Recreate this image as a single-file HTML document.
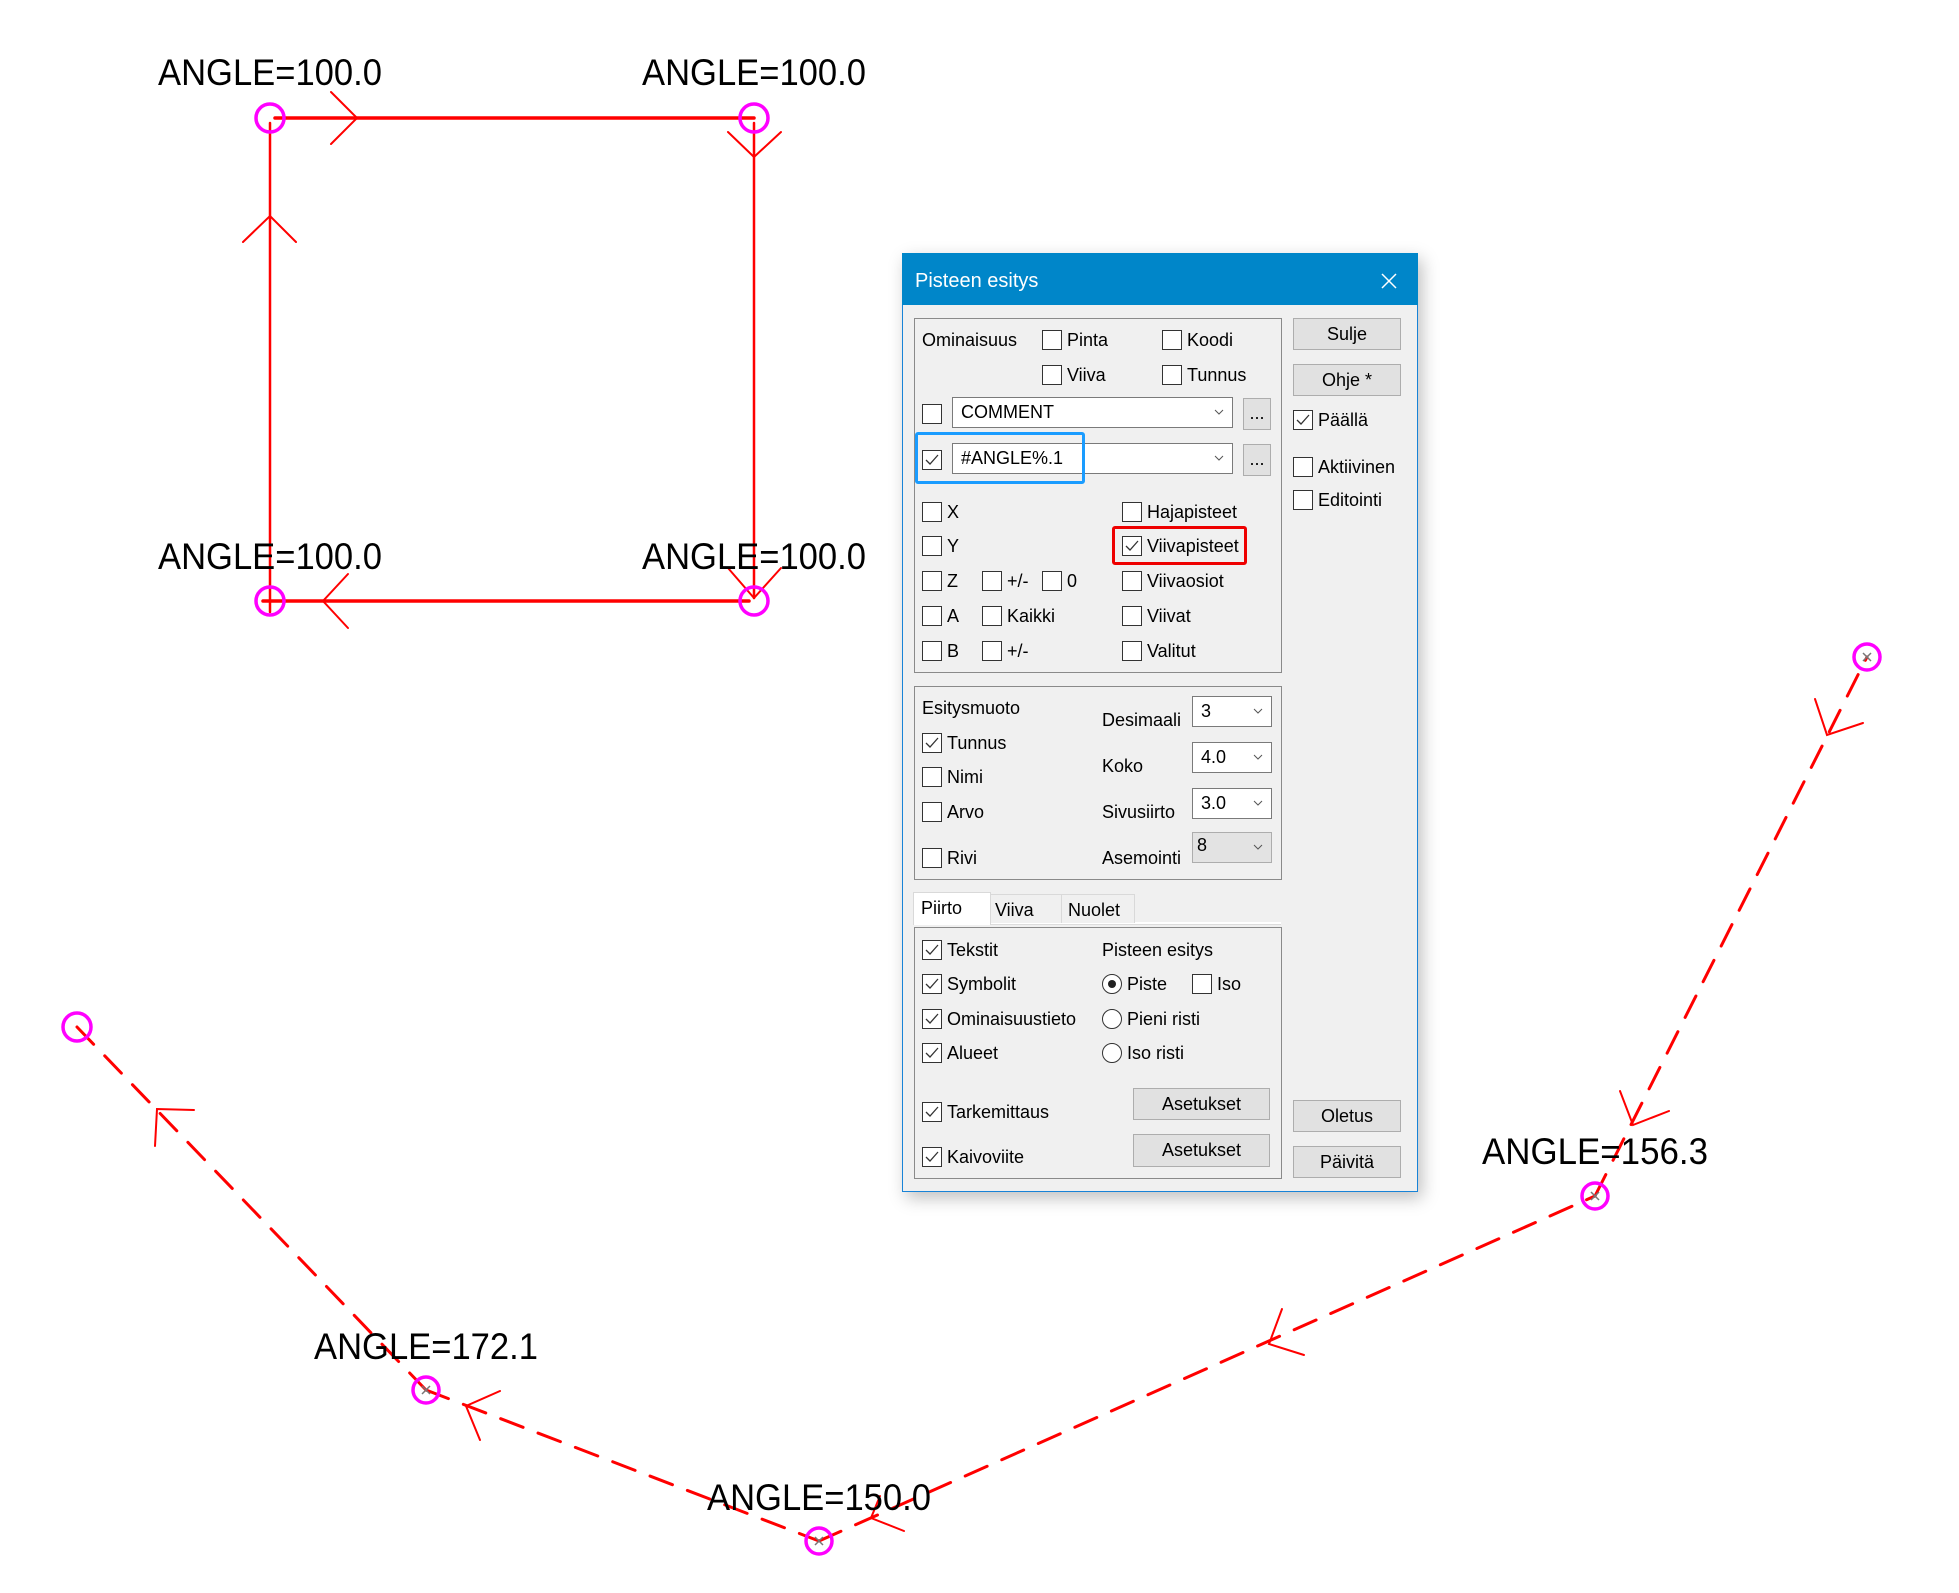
<!DOCTYPE html>
<html><head><meta charset="utf-8">
<style>
html,body{margin:0;padding:0;background:#fff;}
body{width:1959px;height:1593px;position:relative;overflow:hidden;font-family:"Liberation Sans",sans-serif;}
svg.draw{position:absolute;left:0;top:0;}
.dlg{position:absolute;left:902px;top:253px;width:514px;height:937px;background:#f0f0f0;border:1px solid #1883d7;box-shadow:4px 6px 16px rgba(0,0,0,0.25);}
.title{position:absolute;left:902px;top:253px;width:516px;height:52px;background:#0086c9;}
.tt{position:absolute;left:915px;top:268px;color:#fff;font-size:20px;line-height:26px;}
.a{position:absolute;}
.t{position:absolute;font-size:18px;line-height:22px;white-space:nowrap;color:#000;}
.cb{position:absolute;width:18px;height:18px;border:1px solid #333;background:#fff;}
.cb svg{position:absolute;left:0;top:0;}
.grp{position:absolute;border:1px solid #8a8a8a;}
.btn{position:absolute;background:#e1e1e1;border:1px solid #adadad;box-sizing:border-box;text-align:center;font-size:18px;color:#000;}
.combo{position:absolute;background:#fff;border:1px solid #7a7a7a;box-sizing:border-box;font-size:18px;}
.combo .v{position:absolute;left:8px;top:3px;line-height:22px;}
.chev{position:absolute;right:8px;top:50%;margin-top:-4px;}
.rad{position:absolute;width:18px;height:18px;border:1px solid #333;border-radius:50%;background:#fff;}
</style></head><body>

<svg class="draw" width="1959" height="1593" viewBox="0 0 1959 1593">
 <g stroke="#ff0000" fill="none" stroke-linecap="round">
  <line x1="275" y1="118" x2="754" y2="118" stroke-width="3.5"/>
  <line x1="754" y1="123" x2="754" y2="598" stroke-width="2.5"/>
  <line x1="263" y1="601" x2="749" y2="601" stroke-width="3.5"/>
  <line x1="270" y1="123" x2="270" y2="612" stroke-width="2.5"/>
  <polyline points="331,92 357,118 331,144" stroke-width="2"/>
  <polyline points="728,132 754,157 781,132" stroke-width="2"/>
  <polyline points="243,242 270,216 296,242" stroke-width="2"/>
  <polyline points="348,574 323,601 348,628" stroke-width="2"/>
  <polyline points="728,568 754,598 781,568" stroke-width="2"/>
  <g stroke-width="3" stroke-dasharray="24,16">
   <line x1="77" y1="1027" x2="426" y2="1390"/>
   <line x1="426" y1="1390" x2="819" y2="1541"/>
   <line x1="819" y1="1541" x2="1595" y2="1196"/>
   <line x1="1595" y1="1196" x2="1867" y2="657"/>
  </g>
  <g stroke-width="2">
   <polyline points="194,1110 157,1109 155,1146"/>
   <polyline points="500,1391 466,1406 480,1440"/>
   <polyline points="880,1496 871,1518 904,1531"/>
   <polyline points="1282,1309 1269,1344 1304,1355"/>
   <polyline points="1620,1091 1633,1125 1669,1111"/>
   <polyline points="1815,699 1827,735 1863,723"/>
  </g>
 </g>
 <g stroke="#ff00ff" stroke-width="3.5" fill="none">
  <circle cx="270" cy="118" r="14"/>
  <circle cx="754" cy="118" r="14"/>
  <circle cx="270" cy="601" r="14"/>
  <circle cx="754" cy="601" r="14"/>
  <circle cx="77" cy="1027" r="14"/>
  <circle cx="426" cy="1390" r="13"/>
  <circle cx="819" cy="1541" r="13"/>
  <circle cx="1595" cy="1196" r="13"/>
  <circle cx="1867" cy="657" r="13"/>
 </g>
 <g stroke="#777" stroke-width="1.5">
  <path d="M422 1386l8 8M430 1386l-8 8"/>
  <path d="M815 1537l8 8M823 1537l-8 8"/>
  <path d="M1591 1192l8 8M1599 1192l-8 8"/>
  <path d="M1863 653l8 8M1871 653l-8 8"/>
 </g>
 <g font-family="Liberation Sans, sans-serif" font-size="37" fill="#000" text-anchor="middle">
  <text x="270" y="85" textLength="224" lengthAdjust="spacingAndGlyphs">ANGLE=100.0</text>
  <text x="754" y="85" textLength="224" lengthAdjust="spacingAndGlyphs">ANGLE=100.0</text>
  <text x="270" y="569" textLength="224" lengthAdjust="spacingAndGlyphs">ANGLE=100.0</text>
  <text x="754" y="569" textLength="224" lengthAdjust="spacingAndGlyphs">ANGLE=100.0</text>
  <text x="426" y="1359" textLength="224" lengthAdjust="spacingAndGlyphs">ANGLE=172.1</text>
  <text x="819" y="1510" textLength="224" lengthAdjust="spacingAndGlyphs">ANGLE=150.0</text>
  <text x="1595" y="1164" textLength="226" lengthAdjust="spacingAndGlyphs">ANGLE=156.3</text>
 </g>
</svg>

<div class="dlg"></div>
<div class="title"></div>
<div class="tt">Pisteen esitys</div>
<svg class="a" style="left:1381px;top:273px" width="16" height="16"><path d="M1 1L15 15M15 1L1 15" stroke="#fff" stroke-width="1.5"/></svg>

<div class="grp" style="left:914px;top:318px;width:366px;height:353px"></div>
<div class="t" style="left:922px;top:329px">Ominaisuus</div>

<div class="cb" style="left:1042px;top:330px"></div><div class="t" style="left:1067px;top:329px">Pinta</div>
<div class="cb" style="left:1162px;top:330px"></div><div class="t" style="left:1187px;top:329px">Koodi</div>
<div class="cb" style="left:1042px;top:365px"></div><div class="t" style="left:1067px;top:364px">Viiva</div>
<div class="cb" style="left:1162px;top:365px"></div><div class="t" style="left:1187px;top:364px">Tunnus</div>

<div class="cb" style="left:922px;top:404px"></div>
<div class="combo" style="left:952px;top:397px;width:281px;height:31px"><span class="v">COMMENT</span><svg class="chev" width="10" height="7"><path d="M1 1L5 5L9 1" stroke="#555" fill="none"/></svg></div>
<div class="btn" style="left:1243px;top:398px;width:28px;height:32px;line-height:28px">...</div>

<div class="cb" style="left:922px;top:450px"><svg width="18" height="18"><path d="M3 9L7 13L15 4" stroke="#333" fill="none" stroke-width="1.3"/></svg></div>
<div class="combo" style="left:952px;top:443px;width:281px;height:31px"><span class="v">#ANGLE%.1</span><svg class="chev" width="10" height="7"><path d="M1 1L5 5L9 1" stroke="#555" fill="none"/></svg></div>
<div class="btn" style="left:1243px;top:444px;width:28px;height:32px;line-height:28px">...</div>
<div class="a" style="left:915px;top:432px;width:164px;height:46px;border:3px solid #1a9cff;border-radius:3px"></div>

<div class="cb" style="left:922px;top:502px"></div><div class="t" style="left:947px;top:501px">X</div>
<div class="cb" style="left:922px;top:536px"></div><div class="t" style="left:947px;top:535px">Y</div>
<div class="cb" style="left:922px;top:571px"></div><div class="t" style="left:947px;top:570px">Z</div>
<div class="cb" style="left:982px;top:571px"></div><div class="t" style="left:1007px;top:570px">+/-</div>
<div class="cb" style="left:1042px;top:571px"></div><div class="t" style="left:1067px;top:570px">0</div>
<div class="cb" style="left:922px;top:606px"></div><div class="t" style="left:947px;top:605px">A</div>
<div class="cb" style="left:982px;top:606px"></div><div class="t" style="left:1007px;top:605px">Kaikki</div>
<div class="cb" style="left:922px;top:641px"></div><div class="t" style="left:947px;top:640px">B</div>
<div class="cb" style="left:982px;top:641px"></div><div class="t" style="left:1007px;top:640px">+/-</div>

<div class="cb" style="left:1122px;top:502px"></div><div class="t" style="left:1147px;top:501px">Hajapisteet</div>
<div class="cb" style="left:1122px;top:536px"><svg width="18" height="18"><path d="M3 9L7 13L15 4" stroke="#333" fill="none" stroke-width="1.3"/></svg></div><div class="t" style="left:1147px;top:535px">Viivapisteet</div>
<div class="a" style="left:1112px;top:526px;width:129px;height:33px;border:3px solid #ee0000;border-radius:3px"></div>
<div class="cb" style="left:1122px;top:571px"></div><div class="t" style="left:1147px;top:570px">Viivaosiot</div>
<div class="cb" style="left:1122px;top:606px"></div><div class="t" style="left:1147px;top:605px">Viivat</div>
<div class="cb" style="left:1122px;top:641px"></div><div class="t" style="left:1147px;top:640px">Valitut</div>

<div class="btn" style="left:1293px;top:318px;width:108px;height:32px;line-height:30px">Sulje</div>
<div class="btn" style="left:1293px;top:364px;width:108px;height:32px;line-height:30px">Ohje *</div>
<div class="cb" style="left:1293px;top:410px"><svg width="18" height="18"><path d="M3 9L7 13L15 4" stroke="#333" fill="none" stroke-width="1.3"/></svg></div><div class="t" style="left:1318px;top:409px">Päällä</div>
<div class="cb" style="left:1293px;top:457px"></div><div class="t" style="left:1318px;top:456px">Aktiivinen</div>
<div class="cb" style="left:1293px;top:490px"></div><div class="t" style="left:1318px;top:489px">Editointi</div>

<div class="grp" style="left:914px;top:686px;width:366px;height:192px"></div>
<div class="t" style="left:922px;top:697px">Esitysmuoto</div>
<div class="cb" style="left:922px;top:733px"><svg width="18" height="18"><path d="M3 9L7 13L15 4" stroke="#333" fill="none" stroke-width="1.3"/></svg></div><div class="t" style="left:947px;top:732px">Tunnus</div>
<div class="cb" style="left:922px;top:767px"></div><div class="t" style="left:947px;top:766px">Nimi</div>
<div class="cb" style="left:922px;top:802px"></div><div class="t" style="left:947px;top:801px">Arvo</div>
<div class="cb" style="left:922px;top:848px"></div><div class="t" style="left:947px;top:847px">Rivi</div>
<div class="t" style="left:1102px;top:709px">Desimaali</div>
<div class="t" style="left:1102px;top:755px">Koko</div>
<div class="t" style="left:1102px;top:801px">Sivusiirto</div>
<div class="t" style="left:1102px;top:847px">Asemointi</div>
<div class="combo" style="left:1192px;top:696px;width:80px;height:31px"><span class="v">3</span><svg class="chev" width="10" height="7"><path d="M1 1L5 5L9 1" stroke="#555" fill="none"/></svg></div>
<div class="combo" style="left:1192px;top:742px;width:80px;height:31px"><span class="v">4.0</span><svg class="chev" width="10" height="7"><path d="M1 1L5 5L9 1" stroke="#555" fill="none"/></svg></div>
<div class="combo" style="left:1192px;top:788px;width:80px;height:31px"><span class="v">3.0</span><svg class="chev" width="10" height="7"><path d="M1 1L5 5L9 1" stroke="#555" fill="none"/></svg></div>
<div class="combo" style="left:1192px;top:832px;width:80px;height:31px;background:#e3e3e3;border-color:#adadad"><span class="v" style="left:4px;top:1px">8</span><svg class="chev" width="10" height="7"><path d="M1 1L5 5L9 1" stroke="#555" fill="none"/></svg></div>

<div class="a" style="left:913px;top:922px;width:368px;height:2px;background:#fff;border-bottom:1px solid #ddd"></div>
<div class="a" style="left:989px;top:894px;width:72px;height:28px;border:1px solid #d9d9d9;border-bottom:none;background:#f0f0f0"></div>
<div class="a" style="left:1061px;top:894px;width:72px;height:28px;border:1px solid #d9d9d9;border-bottom:none;background:#f0f0f0"></div>
<div class="a" style="left:913px;top:892px;width:76px;height:32px;background:#fff;border:1px solid #d9d9d9;border-bottom:none"></div>
<div class="t" style="left:921px;top:897px">Piirto</div>
<div class="t" style="left:995px;top:899px">Viiva</div>
<div class="t" style="left:1068px;top:899px">Nuolet</div>

<div class="grp" style="left:914px;top:927px;width:366px;height:250px"></div>
<div class="cb" style="left:922px;top:940px"><svg width="18" height="18"><path d="M3 9L7 13L15 4" stroke="#333" fill="none" stroke-width="1.3"/></svg></div><div class="t" style="left:947px;top:939px">Tekstit</div>
<div class="cb" style="left:922px;top:974px"><svg width="18" height="18"><path d="M3 9L7 13L15 4" stroke="#333" fill="none" stroke-width="1.3"/></svg></div><div class="t" style="left:947px;top:973px">Symbolit</div>
<div class="cb" style="left:922px;top:1009px"><svg width="18" height="18"><path d="M3 9L7 13L15 4" stroke="#333" fill="none" stroke-width="1.3"/></svg></div><div class="t" style="left:947px;top:1008px">Ominaisuustieto</div>
<div class="cb" style="left:922px;top:1043px"><svg width="18" height="18"><path d="M3 9L7 13L15 4" stroke="#333" fill="none" stroke-width="1.3"/></svg></div><div class="t" style="left:947px;top:1042px">Alueet</div>
<div class="cb" style="left:922px;top:1102px"><svg width="18" height="18"><path d="M3 9L7 13L15 4" stroke="#333" fill="none" stroke-width="1.3"/></svg></div><div class="t" style="left:947px;top:1101px">Tarkemittaus</div>
<div class="cb" style="left:922px;top:1147px"><svg width="18" height="18"><path d="M3 9L7 13L15 4" stroke="#333" fill="none" stroke-width="1.3"/></svg></div><div class="t" style="left:947px;top:1146px">Kaivoviite</div>

<div class="t" style="left:1102px;top:939px">Pisteen esitys</div>
<div class="rad" style="left:1102px;top:974px"><div style="position:absolute;left:5px;top:5px;width:8px;height:8px;border-radius:50%;background:#222"></div></div><div class="t" style="left:1127px;top:973px">Piste</div>
<div class="cb" style="left:1192px;top:974px"></div><div class="t" style="left:1217px;top:973px">Iso</div>
<div class="rad" style="left:1102px;top:1009px"></div><div class="t" style="left:1127px;top:1008px">Pieni risti</div>
<div class="rad" style="left:1102px;top:1043px"></div><div class="t" style="left:1127px;top:1042px">Iso risti</div>

<div class="btn" style="left:1133px;top:1088px;width:137px;height:32px;line-height:30px">Asetukset</div>
<div class="btn" style="left:1133px;top:1134px;width:137px;height:33px;line-height:31px">Asetukset</div>
<div class="btn" style="left:1293px;top:1100px;width:108px;height:32px;line-height:30px">Oletus</div>
<div class="btn" style="left:1293px;top:1146px;width:108px;height:32px;line-height:30px">Päivitä</div>

</body></html>
